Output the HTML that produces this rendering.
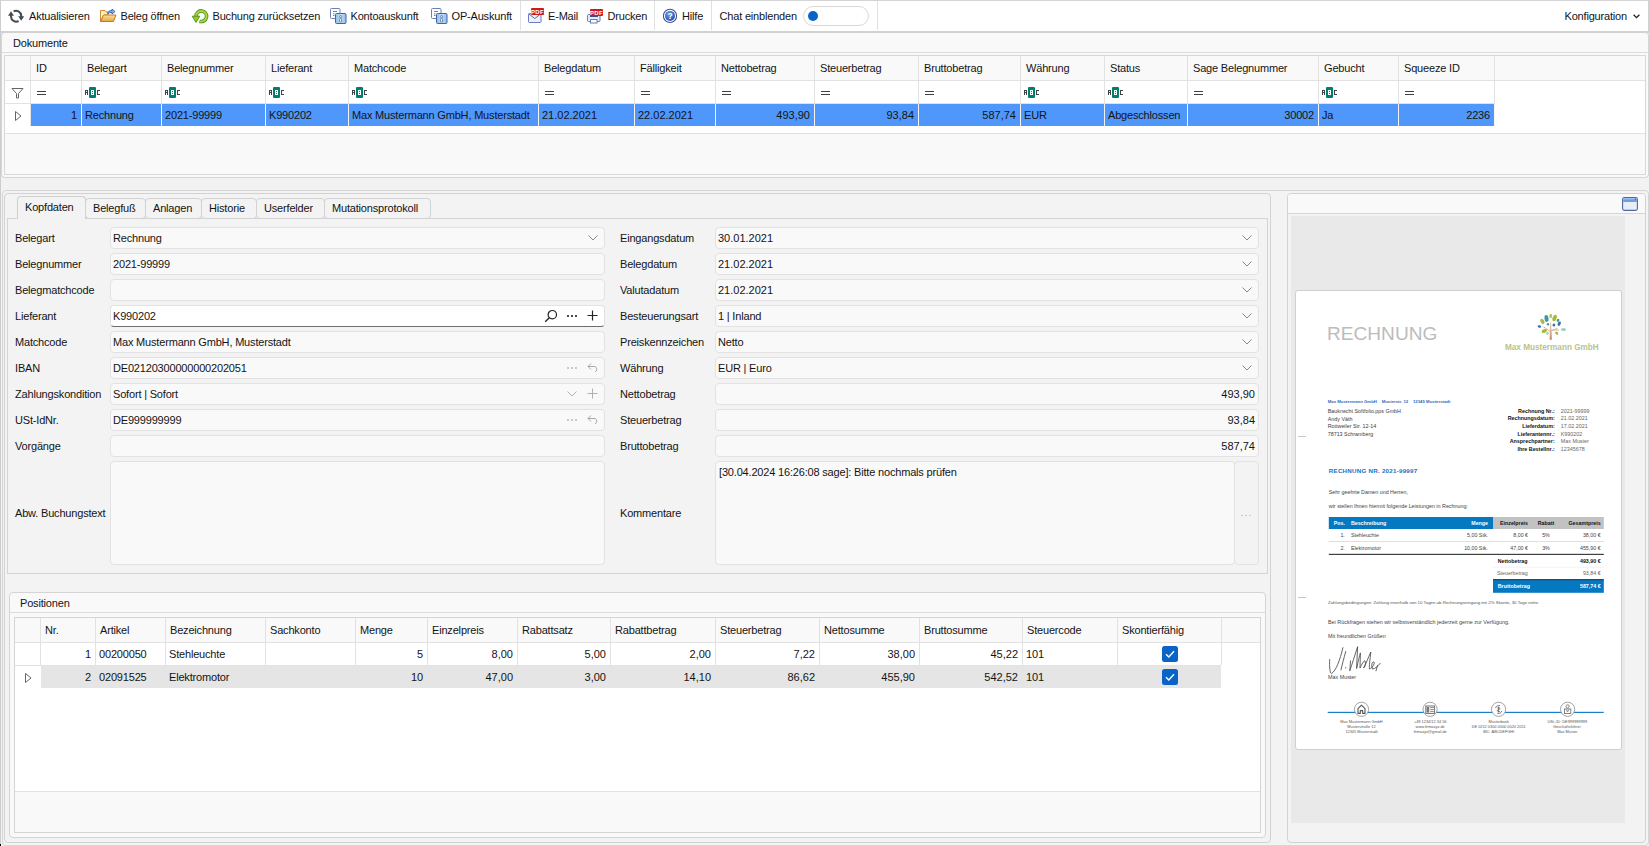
<!DOCTYPE html><html><head><meta charset="utf-8"><style>
*{box-sizing:border-box;margin:0;padding:0}
html,body{width:1649px;height:846px;overflow:hidden;background:#f2f2f2;font-family:"Liberation Sans", sans-serif;font-size:11px;color:#141414}
.abs{position:absolute}
.t{position:absolute;white-space:nowrap;line-height:13px;letter-spacing:-0.18px}
.bx{position:absolute;border:1px solid #e2e2e2;border-radius:4px;background:#f9f9f9}
</style></head><body><div class="abs" style="left:0;top:0;width:1649px;height:846px;border-left:1px solid #cdcdcd"></div><div class="abs" style="left:0;top:0;width:1649px;height:33px;background:#fff;border-top:1px solid #d4d4d4;border-left:1px solid #cdcdcd;border-right:1px solid #d0d0d0;border-bottom:2px solid #d2d2d2"></div><div class="t" style="left:29px;top:10px">Aktualisieren</div><div class="t" style="left:120.5px;top:10px">Beleg öffnen</div><div class="t" style="left:212.5px;top:10px">Buchung zurücksetzen</div><div class="t" style="left:350.5px;top:10px">Kontoauskunft</div><div class="t" style="left:451.5px;top:10px">OP-Auskunft</div><div class="t" style="left:548px;top:10px">E-Mail</div><div class="t" style="left:607.5px;top:10px">Drucken</div><div class="t" style="left:682px;top:10px">Hilfe</div><div class="t" style="left:719.5px;top:10px">Chat einblenden</div><div class="t" style="left:1564.5px;top:10px">Konfiguration</div><div class="abs" style="left:520px;top:1px;width:1px;height:29px;background:#e0e0e0"></div><div class="abs" style="left:654px;top:1px;width:1px;height:29px;background:#e0e0e0"></div><div class="abs" style="left:711px;top:1px;width:1px;height:29px;background:#e0e0e0"></div><div class="abs" style="left:877px;top:1px;width:1px;height:29px;background:#e0e0e0"></div><div class="abs" style="left:803px;top:6px;width:66px;height:20px;border:1px solid #d8d8d8;border-radius:10px;background:#fff"></div><div class="abs" style="left:808px;top:11px;width:10px;height:10px;border-radius:5px;background:#0a64c8"></div><div class="abs" style="left:1px;top:32px;width:1648px;height:146px;border:1px solid #d6d6d6;border-top-color:#d2d2d2;border-radius:4px;background:#f9f9f9"></div><div class="abs" style="left:2px;top:52px;width:1646px;height:1px;background:#dcdcdc"></div><div class="t" style="left:13px;top:37px">Dokumente</div><div class="abs" style="left:4px;top:55px;width:1642px;height:120px;border:1px solid #d8d8d8;background:#f9f9f9"></div><div class="abs" style="left:5px;top:56px;width:1640px;height:77px;background:#fff"></div><div class="abs" style="left:5px;top:56px;width:1640px;height:24px;background:#f9f9f9"></div><div class="abs" style="left:5px;top:80px;width:1640px;height:1px;background:#e2e2e2"></div><div class="abs" style="left:5px;top:133px;width:1640px;height:1px;background:#e2e2e2"></div><div class="abs" style="left:5px;top:103px;width:1490px;height:1px;background:#e2e2e2"></div><div class="abs" style="left:0;top:844px;width:1px;height:2px;background:#000"></div><div class="abs" style="left:31px;top:104px;width:1463px;height:22px;background:#4f97fb"></div><div class="abs" style="left:30px;top:56px;width:1px;height:70px;background:#e2e2e2"></div><div class="abs" style="left:81px;top:56px;width:1px;height:70px;background:#e2e2e2"></div><div class="abs" style="left:161px;top:56px;width:1px;height:70px;background:#e2e2e2"></div><div class="abs" style="left:265px;top:56px;width:1px;height:70px;background:#e2e2e2"></div><div class="abs" style="left:348px;top:56px;width:1px;height:70px;background:#e2e2e2"></div><div class="abs" style="left:538px;top:56px;width:1px;height:70px;background:#e2e2e2"></div><div class="abs" style="left:634px;top:56px;width:1px;height:70px;background:#e2e2e2"></div><div class="abs" style="left:715px;top:56px;width:1px;height:70px;background:#e2e2e2"></div><div class="abs" style="left:814px;top:56px;width:1px;height:70px;background:#e2e2e2"></div><div class="abs" style="left:918px;top:56px;width:1px;height:70px;background:#e2e2e2"></div><div class="abs" style="left:1020px;top:56px;width:1px;height:70px;background:#e2e2e2"></div><div class="abs" style="left:1104px;top:56px;width:1px;height:70px;background:#e2e2e2"></div><div class="abs" style="left:1187px;top:56px;width:1px;height:70px;background:#e2e2e2"></div><div class="abs" style="left:1318px;top:56px;width:1px;height:70px;background:#e2e2e2"></div><div class="abs" style="left:1398px;top:56px;width:1px;height:70px;background:#e2e2e2"></div><div class="abs" style="left:1494px;top:56px;width:1px;height:70px;background:#e2e2e2"></div><div class="abs" style="left:81px;top:104px;width:1px;height:22px;background:#fff;opacity:.6"></div><div class="abs" style="left:161px;top:104px;width:1px;height:22px;background:#fff;opacity:.6"></div><div class="abs" style="left:265px;top:104px;width:1px;height:22px;background:#fff;opacity:.6"></div><div class="abs" style="left:348px;top:104px;width:1px;height:22px;background:#fff;opacity:.6"></div><div class="abs" style="left:538px;top:104px;width:1px;height:22px;background:#fff;opacity:.6"></div><div class="abs" style="left:634px;top:104px;width:1px;height:22px;background:#fff;opacity:.6"></div><div class="abs" style="left:715px;top:104px;width:1px;height:22px;background:#fff;opacity:.6"></div><div class="abs" style="left:814px;top:104px;width:1px;height:22px;background:#fff;opacity:.6"></div><div class="abs" style="left:918px;top:104px;width:1px;height:22px;background:#fff;opacity:.6"></div><div class="abs" style="left:1020px;top:104px;width:1px;height:22px;background:#fff;opacity:.6"></div><div class="abs" style="left:1104px;top:104px;width:1px;height:22px;background:#fff;opacity:.6"></div><div class="abs" style="left:1187px;top:104px;width:1px;height:22px;background:#fff;opacity:.6"></div><div class="abs" style="left:1318px;top:104px;width:1px;height:22px;background:#fff;opacity:.6"></div><div class="abs" style="left:1398px;top:104px;width:1px;height:22px;background:#fff;opacity:.6"></div><div class="abs" style="left:1494px;top:104px;width:1px;height:22px;background:#fff;opacity:.6"></div><div class="t" style="left:36px;top:62px">ID</div><div class="abs" style="left:37px;top:91px;width:9px;height:4px;border-top:1px solid #3d4247;border-bottom:1px solid #3d4247"></div><div class="t" style="right:1572px;top:109px">1</div><div class="t" style="left:87px;top:62px">Belegart</div><svg width="17" height="11" viewBox="0 0 17 11" style="position:absolute;left:85px;top:87px"><g fill="#3d4247"><rect x="0" y="3" width="1" height="5"/><rect x="2" y="3" width="1" height="5"/><rect x="0" y="3" width="3" height="1"/><rect x="0" y="5" width="3" height="1"/></g><rect x="4" y="0" width="7" height="11" rx="1" fill="#00806c"/><rect x="6" y="3" width="3" height="5" fill="#fff"/><rect x="7" y="4" width="1" height="1" fill="#00806c"/><rect x="7" y="6" width="1" height="1" fill="#00806c"/><g fill="#3d4247"><rect x="12" y="3" width="1" height="5"/><rect x="12" y="3" width="3" height="1"/><rect x="12" y="7" width="3" height="1"/></g></svg><div class="t" style="left:85px;top:109px">Rechnung</div><div class="t" style="left:167px;top:62px">Belegnummer</div><svg width="17" height="11" viewBox="0 0 17 11" style="position:absolute;left:165px;top:87px"><g fill="#3d4247"><rect x="0" y="3" width="1" height="5"/><rect x="2" y="3" width="1" height="5"/><rect x="0" y="3" width="3" height="1"/><rect x="0" y="5" width="3" height="1"/></g><rect x="4" y="0" width="7" height="11" rx="1" fill="#00806c"/><rect x="6" y="3" width="3" height="5" fill="#fff"/><rect x="7" y="4" width="1" height="1" fill="#00806c"/><rect x="7" y="6" width="1" height="1" fill="#00806c"/><g fill="#3d4247"><rect x="12" y="3" width="1" height="5"/><rect x="12" y="3" width="3" height="1"/><rect x="12" y="7" width="3" height="1"/></g></svg><div class="t" style="left:165px;top:109px">2021-99999</div><div class="t" style="left:271px;top:62px">Lieferant</div><svg width="17" height="11" viewBox="0 0 17 11" style="position:absolute;left:269px;top:87px"><g fill="#3d4247"><rect x="0" y="3" width="1" height="5"/><rect x="2" y="3" width="1" height="5"/><rect x="0" y="3" width="3" height="1"/><rect x="0" y="5" width="3" height="1"/></g><rect x="4" y="0" width="7" height="11" rx="1" fill="#00806c"/><rect x="6" y="3" width="3" height="5" fill="#fff"/><rect x="7" y="4" width="1" height="1" fill="#00806c"/><rect x="7" y="6" width="1" height="1" fill="#00806c"/><g fill="#3d4247"><rect x="12" y="3" width="1" height="5"/><rect x="12" y="3" width="3" height="1"/><rect x="12" y="7" width="3" height="1"/></g></svg><div class="t" style="left:269px;top:109px">K990202</div><div class="t" style="left:354px;top:62px">Matchcode</div><svg width="17" height="11" viewBox="0 0 17 11" style="position:absolute;left:352px;top:87px"><g fill="#3d4247"><rect x="0" y="3" width="1" height="5"/><rect x="2" y="3" width="1" height="5"/><rect x="0" y="3" width="3" height="1"/><rect x="0" y="5" width="3" height="1"/></g><rect x="4" y="0" width="7" height="11" rx="1" fill="#00806c"/><rect x="6" y="3" width="3" height="5" fill="#fff"/><rect x="7" y="4" width="1" height="1" fill="#00806c"/><rect x="7" y="6" width="1" height="1" fill="#00806c"/><g fill="#3d4247"><rect x="12" y="3" width="1" height="5"/><rect x="12" y="3" width="3" height="1"/><rect x="12" y="7" width="3" height="1"/></g></svg><div class="t" style="left:352px;top:109px">Max Mustermann GmbH, Musterstadt</div><div class="t" style="left:544px;top:62px">Belegdatum</div><div class="abs" style="left:545px;top:91px;width:9px;height:4px;border-top:1px solid #3d4247;border-bottom:1px solid #3d4247"></div><div class="t" style="letter-spacing:0;left:542px;top:109px">21.02.2021</div><div class="t" style="left:640px;top:62px">Fälligkeit</div><div class="abs" style="left:641px;top:91px;width:9px;height:4px;border-top:1px solid #3d4247;border-bottom:1px solid #3d4247"></div><div class="t" style="letter-spacing:0;left:638px;top:109px">22.02.2021</div><div class="t" style="left:721px;top:62px">Nettobetrag</div><div class="abs" style="left:722px;top:91px;width:9px;height:4px;border-top:1px solid #3d4247;border-bottom:1px solid #3d4247"></div><div class="t" style="letter-spacing:0;right:839px;top:109px">493,90</div><div class="t" style="left:820px;top:62px">Steuerbetrag</div><div class="abs" style="left:821px;top:91px;width:9px;height:4px;border-top:1px solid #3d4247;border-bottom:1px solid #3d4247"></div><div class="t" style="letter-spacing:0;right:735px;top:109px">93,84</div><div class="t" style="left:924px;top:62px">Bruttobetrag</div><div class="abs" style="left:925px;top:91px;width:9px;height:4px;border-top:1px solid #3d4247;border-bottom:1px solid #3d4247"></div><div class="t" style="letter-spacing:0;right:633px;top:109px">587,74</div><div class="t" style="left:1026px;top:62px">Währung</div><svg width="17" height="11" viewBox="0 0 17 11" style="position:absolute;left:1024px;top:87px"><g fill="#3d4247"><rect x="0" y="3" width="1" height="5"/><rect x="2" y="3" width="1" height="5"/><rect x="0" y="3" width="3" height="1"/><rect x="0" y="5" width="3" height="1"/></g><rect x="4" y="0" width="7" height="11" rx="1" fill="#00806c"/><rect x="6" y="3" width="3" height="5" fill="#fff"/><rect x="7" y="4" width="1" height="1" fill="#00806c"/><rect x="7" y="6" width="1" height="1" fill="#00806c"/><g fill="#3d4247"><rect x="12" y="3" width="1" height="5"/><rect x="12" y="3" width="3" height="1"/><rect x="12" y="7" width="3" height="1"/></g></svg><div class="t" style="left:1024px;top:109px">EUR</div><div class="t" style="left:1110px;top:62px">Status</div><svg width="17" height="11" viewBox="0 0 17 11" style="position:absolute;left:1108px;top:87px"><g fill="#3d4247"><rect x="0" y="3" width="1" height="5"/><rect x="2" y="3" width="1" height="5"/><rect x="0" y="3" width="3" height="1"/><rect x="0" y="5" width="3" height="1"/></g><rect x="4" y="0" width="7" height="11" rx="1" fill="#00806c"/><rect x="6" y="3" width="3" height="5" fill="#fff"/><rect x="7" y="4" width="1" height="1" fill="#00806c"/><rect x="7" y="6" width="1" height="1" fill="#00806c"/><g fill="#3d4247"><rect x="12" y="3" width="1" height="5"/><rect x="12" y="3" width="3" height="1"/><rect x="12" y="7" width="3" height="1"/></g></svg><div class="t" style="left:1108px;top:109px">Abgeschlossen</div><div class="t" style="left:1193px;top:62px">Sage Belegnummer</div><div class="abs" style="left:1194px;top:91px;width:9px;height:4px;border-top:1px solid #3d4247;border-bottom:1px solid #3d4247"></div><div class="t" style="right:335px;top:109px">30002</div><div class="t" style="left:1324px;top:62px">Gebucht</div><svg width="17" height="11" viewBox="0 0 17 11" style="position:absolute;left:1322px;top:87px"><g fill="#3d4247"><rect x="0" y="3" width="1" height="5"/><rect x="2" y="3" width="1" height="5"/><rect x="0" y="3" width="3" height="1"/><rect x="0" y="5" width="3" height="1"/></g><rect x="4" y="0" width="7" height="11" rx="1" fill="#00806c"/><rect x="6" y="3" width="3" height="5" fill="#fff"/><rect x="7" y="4" width="1" height="1" fill="#00806c"/><rect x="7" y="6" width="1" height="1" fill="#00806c"/><g fill="#3d4247"><rect x="12" y="3" width="1" height="5"/><rect x="12" y="3" width="3" height="1"/><rect x="12" y="7" width="3" height="1"/></g></svg><div class="t" style="left:1322px;top:109px">Ja</div><div class="t" style="left:1404px;top:62px">Squeeze ID</div><div class="abs" style="left:1405px;top:91px;width:9px;height:4px;border-top:1px solid #3d4247;border-bottom:1px solid #3d4247"></div><div class="t" style="right:159px;top:109px">2236</div><svg class="abs" style="left:11px;top:87px" width="13" height="12" viewBox="0 0 13 12"><path d="M1 1.5H12L7.5 6.5V11H5.5V6.5Z" fill="none" stroke="#666" stroke-width="1"/></svg><svg class="abs" style="left:14px;top:110px" width="9" height="12" viewBox="0 0 9 12"><path d="M1.5 1.5L7 6L1.5 10.5Z" fill="none" stroke="#666" stroke-width="1"/></svg><div class="abs" style="left:2px;top:190px;width:1647px;height:656px;border:1px solid #d6d6d6;border-radius:4px;background:#f3f3f3"></div><div class="abs" style="left:4px;top:193px;width:1267px;height:650px;border:1px solid #d2d2d2;border-radius:4px;background:#f3f3f3"></div><div class="abs" style="left:7px;top:218px;width:1261px;height:356px;border:1px solid #d4d4d4;background:#f3f3f3"></div><div class="abs" style="left:17px;top:196px;width:69px;height:23px;border:1px solid #cfcfcf;border-bottom:none;border-radius:4px 4px 0 0;background:#f3f3f3"></div><div class="t" style="left:25px;top:201px">Kopfdaten</div><div class="abs" style="left:85px;top:198px;width:61px;height:21px;border:1px solid #d2d2d2;border-radius:4px;background:#f3f3f3"></div><div class="t" style="left:93px;top:202px">Belegfuß</div><div class="abs" style="left:145px;top:198px;width:57px;height:21px;border:1px solid #d2d2d2;border-radius:4px;background:#f3f3f3"></div><div class="t" style="left:153px;top:202px">Anlagen</div><div class="abs" style="left:201px;top:198px;width:56px;height:21px;border:1px solid #d2d2d2;border-radius:4px;background:#f3f3f3"></div><div class="t" style="left:209px;top:202px">Historie</div><div class="abs" style="left:256px;top:198px;width:69px;height:21px;border:1px solid #d2d2d2;border-radius:4px;background:#f3f3f3"></div><div class="t" style="left:264px;top:202px">Userfelder</div><div class="abs" style="left:324px;top:198px;width:107px;height:21px;border:1px solid #d2d2d2;border-radius:4px;background:#f3f3f3"></div><div class="t" style="left:332px;top:202px">Mutationsprotokoll</div><div class="t" style="left:15px;top:232px">Belegart</div><div class="bx" style="left:110px;top:227px;width:495px;height:22px;background:#f9f9f9;"></div><div class="t" style="left:113px;top:232px">Rechnung</div><div class="t" style="left:620px;top:232px">Eingangsdatum</div><div class="bx" style="left:715px;top:227px;width:544px;height:22px"></div><div class="t" style="letter-spacing:0;left:718px;top:232px">30.01.2021</div><svg class="abs" style="left:1242px;top:235px" width="10" height="6" viewBox="0 0 10 6"><path d="M0.5 0.5L5 5L9.5 0.5" fill="none" stroke="#8a8a8a" stroke-width="1"/></svg><div class="t" style="left:15px;top:258px">Belegnummer</div><div class="bx" style="left:110px;top:253px;width:495px;height:22px;background:#f9f9f9;"></div><div class="t" style="left:113px;top:258px">2021-99999</div><div class="t" style="left:620px;top:258px">Belegdatum</div><div class="bx" style="left:715px;top:253px;width:544px;height:22px"></div><div class="t" style="letter-spacing:0;left:718px;top:258px">21.02.2021</div><svg class="abs" style="left:1242px;top:261px" width="10" height="6" viewBox="0 0 10 6"><path d="M0.5 0.5L5 5L9.5 0.5" fill="none" stroke="#8a8a8a" stroke-width="1"/></svg><div class="t" style="left:15px;top:284px">Belegmatchcode</div><div class="bx" style="left:110px;top:279px;width:495px;height:22px;background:#f9f9f9;"></div><div class="t" style="left:620px;top:284px">Valutadatum</div><div class="bx" style="left:715px;top:279px;width:544px;height:22px"></div><div class="t" style="letter-spacing:0;left:718px;top:284px">21.02.2021</div><svg class="abs" style="left:1242px;top:287px" width="10" height="6" viewBox="0 0 10 6"><path d="M0.5 0.5L5 5L9.5 0.5" fill="none" stroke="#8a8a8a" stroke-width="1"/></svg><div class="t" style="left:15px;top:310px">Lieferant</div><div class="bx" style="left:110px;top:305px;width:495px;height:22px;background:#fff;border-bottom:1px solid #6e6e6e;"></div><div class="t" style="left:113px;top:310px">K990202</div><div class="t" style="left:620px;top:310px">Besteuerungsart</div><div class="bx" style="left:715px;top:305px;width:544px;height:22px"></div><div class="t" style="left:718px;top:310px">1 | Inland</div><svg class="abs" style="left:1242px;top:313px" width="10" height="6" viewBox="0 0 10 6"><path d="M0.5 0.5L5 5L9.5 0.5" fill="none" stroke="#8a8a8a" stroke-width="1"/></svg><div class="t" style="left:15px;top:336px">Matchcode</div><div class="bx" style="left:110px;top:331px;width:495px;height:22px;background:#f9f9f9;"></div><div class="t" style="left:113px;top:336px">Max Mustermann GmbH, Musterstadt</div><div class="t" style="left:620px;top:336px">Preiskennzeichen</div><div class="bx" style="left:715px;top:331px;width:544px;height:22px"></div><div class="t" style="left:718px;top:336px">Netto</div><svg class="abs" style="left:1242px;top:339px" width="10" height="6" viewBox="0 0 10 6"><path d="M0.5 0.5L5 5L9.5 0.5" fill="none" stroke="#8a8a8a" stroke-width="1"/></svg><div class="t" style="left:15px;top:362px">IBAN</div><div class="bx" style="left:110px;top:357px;width:495px;height:22px;background:#f9f9f9;"></div><div class="t" style="left:113px;top:362px">DE02120300000000202051</div><div class="t" style="left:620px;top:362px">Währung</div><div class="bx" style="left:715px;top:357px;width:544px;height:22px"></div><div class="t" style="left:718px;top:362px">EUR | Euro</div><svg class="abs" style="left:1242px;top:365px" width="10" height="6" viewBox="0 0 10 6"><path d="M0.5 0.5L5 5L9.5 0.5" fill="none" stroke="#8a8a8a" stroke-width="1"/></svg><div class="t" style="left:15px;top:388px">Zahlungskondition</div><div class="bx" style="left:110px;top:383px;width:495px;height:22px;background:#f9f9f9;"></div><div class="t" style="left:113px;top:388px">Sofort | Sofort</div><div class="t" style="left:620px;top:388px">Nettobetrag</div><div class="bx" style="left:715px;top:383px;width:544px;height:22px"></div><div class="t" style="letter-spacing:0;right:394px;top:388px">493,90</div><div class="t" style="left:15px;top:414px">USt-IdNr.</div><div class="bx" style="left:110px;top:409px;width:495px;height:22px;background:#f9f9f9;"></div><div class="t" style="left:113px;top:414px">DE999999999</div><div class="t" style="left:620px;top:414px">Steuerbetrag</div><div class="bx" style="left:715px;top:409px;width:544px;height:22px"></div><div class="t" style="letter-spacing:0;right:394px;top:414px">93,84</div><div class="t" style="left:15px;top:440px">Vorgänge</div><div class="bx" style="left:110px;top:435px;width:495px;height:22px;background:#f9f9f9;"></div><div class="t" style="left:620px;top:440px">Bruttobetrag</div><div class="bx" style="left:715px;top:435px;width:544px;height:22px"></div><div class="t" style="letter-spacing:0;right:394px;top:440px">587,74</div><svg class="abs" style="left:588px;top:235px" width="10" height="6" viewBox="0 0 10 6"><path d="M0.5 0.5L5 5L9.5 0.5" fill="none" stroke="#8a8a8a" stroke-width="1"/></svg><svg class="abs" style="left:544px;top:309px" width="14" height="14" viewBox="0 0 14 14"><circle cx="8.3" cy="5.7" r="4.2" fill="none" stroke="#222" stroke-width="1.2"/><path d="M5.3 8.7L1.2 12.8" stroke="#222" stroke-width="1.3"/></svg><svg class="abs" style="left:566px;top:314px" width="12" height="4" viewBox="0 0 12 4"><circle cx="2" cy="2" r="1.1" fill="#222"/><circle cx="6" cy="2" r="1.1" fill="#222"/><circle cx="10" cy="2" r="1.1" fill="#222"/></svg><svg class="abs" style="left:587px;top:310px" width="11" height="11" viewBox="0 0 11 11"><path d="M5.5 0.5V10.5M0.5 5.5H10.5" stroke="#222" stroke-width="1.2"/></svg><svg class="abs" style="left:566px;top:366px" width="12" height="4" viewBox="0 0 12 4"><circle cx="2" cy="2" r="1" fill="#b8b8b8"/><circle cx="6" cy="2" r="1" fill="#b8b8b8"/><circle cx="10" cy="2" r="1" fill="#b8b8b8"/></svg><svg class="abs" style="left:587px;top:362px" width="12" height="10" viewBox="0 0 12 10"><path d="M4 1.5L1 4.5L4 7.5M1 4.5H8A3 3 0 0 1 8 10" fill="none" stroke="#a8a8a8" stroke-width="1"/></svg><svg class="abs" style="left:566px;top:418px" width="12" height="4" viewBox="0 0 12 4"><circle cx="2" cy="2" r="1" fill="#b8b8b8"/><circle cx="6" cy="2" r="1" fill="#b8b8b8"/><circle cx="10" cy="2" r="1" fill="#b8b8b8"/></svg><svg class="abs" style="left:587px;top:414px" width="12" height="10" viewBox="0 0 12 10"><path d="M4 1.5L1 4.5L4 7.5M1 4.5H8A3 3 0 0 1 8 10" fill="none" stroke="#a8a8a8" stroke-width="1"/></svg><svg class="abs" style="left:567px;top:391px" width="10" height="6" viewBox="0 0 10 6"><path d="M0.5 0.5L5 5L9.5 0.5" fill="none" stroke="#b0b0b0" stroke-width="1"/></svg><svg class="abs" style="left:587px;top:388px" width="11" height="11" viewBox="0 0 11 11"><path d="M5.5 0.5V10.5M0.5 5.5H10.5" stroke="#b0b0b0" stroke-width="1"/></svg><div class="t" style="left:15px;top:507px">Abw. Buchungstext</div><div class="bx" style="left:110px;top:461px;width:495px;height:104px"></div><div class="t" style="left:620px;top:507px">Kommentare</div><div class="bx" style="left:715px;top:461px;width:520px;height:104px"></div><div class="bx" style="left:1234px;top:461px;width:25px;height:104px;background:#f3f3f3"></div><div class="t" style="left:719px;top:466px">[30.04.2024 16:26:08 sage]: Bitte nochmals prüfen</div><svg class="abs" style="left:1240px;top:514px" width="12" height="3" viewBox="0 0 12 3"><circle cx="2" cy="1.5" r=".8" fill="#c0c0c0"/><circle cx="6" cy="1.5" r=".8" fill="#c0c0c0"/><circle cx="10" cy="1.5" r=".8" fill="#c0c0c0"/></svg><div class="abs" style="left:9px;top:592px;width:1257px;height:246px;border:1px solid #d4d4d4;border-radius:4px;background:#f9f9f9"></div><div class="abs" style="left:10px;top:612px;width:1255px;height:1px;background:#dcdcdc"></div><div class="t" style="left:20px;top:597px">Positionen</div><div class="abs" style="left:14px;top:617px;width:1247px;height:216px;border:1px solid #d4d4d4;background:#fff"></div><div class="abs" style="left:15px;top:618px;width:1245px;height:24px;background:#f9f9f9"></div><div class="abs" style="left:15px;top:791px;width:1245px;height:41px;background:#f9f9f9;border-top:1px solid #e2e2e2"></div><div class="abs" style="left:41px;top:666px;width:1180px;height:22px;background:#e5e5e5"></div><div class="abs" style="left:15px;top:642px;width:1245px;height:1px;background:#e2e2e2"></div><div class="abs" style="left:15px;top:665px;width:1206px;height:1px;background:#e2e2e2"></div><div class="abs" style="left:40px;top:618px;width:1px;height:47px;background:#e2e2e2"></div><div class="abs" style="left:95px;top:618px;width:1px;height:47px;background:#e2e2e2"></div><div class="abs" style="left:165px;top:618px;width:1px;height:47px;background:#e2e2e2"></div><div class="abs" style="left:265px;top:618px;width:1px;height:47px;background:#e2e2e2"></div><div class="abs" style="left:355px;top:618px;width:1px;height:47px;background:#e2e2e2"></div><div class="abs" style="left:427px;top:618px;width:1px;height:47px;background:#e2e2e2"></div><div class="abs" style="left:517px;top:618px;width:1px;height:47px;background:#e2e2e2"></div><div class="abs" style="left:610px;top:618px;width:1px;height:47px;background:#e2e2e2"></div><div class="abs" style="left:715px;top:618px;width:1px;height:47px;background:#e2e2e2"></div><div class="abs" style="left:819px;top:618px;width:1px;height:47px;background:#e2e2e2"></div><div class="abs" style="left:919px;top:618px;width:1px;height:47px;background:#e2e2e2"></div><div class="abs" style="left:1022px;top:618px;width:1px;height:47px;background:#e2e2e2"></div><div class="abs" style="left:1117px;top:618px;width:1px;height:47px;background:#e2e2e2"></div><div class="abs" style="left:1221px;top:618px;width:1px;height:47px;background:#e2e2e2"></div><div class="t" style="left:45px;top:624px">Nr.</div><div class="t" style="right:1558px;top:648px">1</div><div class="t" style="right:1558px;top:671px">2</div><div class="t" style="left:100px;top:624px">Artikel</div><div class="t" style="left:99px;top:648px">00200050</div><div class="t" style="left:99px;top:671px">02091525</div><div class="t" style="left:170px;top:624px">Bezeichnung</div><div class="t" style="left:169px;top:648px">Stehleuchte</div><div class="t" style="left:169px;top:671px">Elektromotor</div><div class="t" style="left:270px;top:624px">Sachkonto</div><div class="t" style="left:269px;top:648px"></div><div class="t" style="left:269px;top:671px"></div><div class="t" style="left:360px;top:624px">Menge</div><div class="t" style="right:1226px;top:648px">5</div><div class="t" style="right:1226px;top:671px">10</div><div class="t" style="left:432px;top:624px">Einzelpreis</div><div class="t" style="letter-spacing:0;right:1136px;top:648px">8,00</div><div class="t" style="letter-spacing:0;right:1136px;top:671px">47,00</div><div class="t" style="left:522px;top:624px">Rabattsatz</div><div class="t" style="letter-spacing:0;right:1043px;top:648px">5,00</div><div class="t" style="letter-spacing:0;right:1043px;top:671px">3,00</div><div class="t" style="left:615px;top:624px">Rabattbetrag</div><div class="t" style="letter-spacing:0;right:938px;top:648px">2,00</div><div class="t" style="letter-spacing:0;right:938px;top:671px">14,10</div><div class="t" style="left:720px;top:624px">Steuerbetrag</div><div class="t" style="letter-spacing:0;right:834px;top:648px">7,22</div><div class="t" style="letter-spacing:0;right:834px;top:671px">86,62</div><div class="t" style="left:824px;top:624px">Nettosumme</div><div class="t" style="letter-spacing:0;right:734px;top:648px">38,00</div><div class="t" style="letter-spacing:0;right:734px;top:671px">455,90</div><div class="t" style="left:924px;top:624px">Bruttosumme</div><div class="t" style="letter-spacing:0;right:631px;top:648px">45,22</div><div class="t" style="letter-spacing:0;right:631px;top:671px">542,52</div><div class="t" style="left:1027px;top:624px">Steuercode</div><div class="t" style="left:1026px;top:648px">101</div><div class="t" style="left:1026px;top:671px">101</div><div class="t" style="left:1122px;top:624px">Skontierfähig</div><svg class="abs" style="left:1162px;top:646px" width="16" height="16" viewBox="0 0 16 16"><rect width="16" height="16" rx="2.5" fill="#0a64c8"/><path d="M4 8.2L6.8 11L12 5.2" fill="none" stroke="#fff" stroke-width="1.4"/></svg><svg class="abs" style="left:1162px;top:669px" width="16" height="16" viewBox="0 0 16 16"><rect width="16" height="16" rx="2.5" fill="#0a64c8"/><path d="M4 8.2L6.8 11L12 5.2" fill="none" stroke="#fff" stroke-width="1.4"/></svg><svg class="abs" style="left:24px;top:672px" width="9" height="12" viewBox="0 0 9 12"><path d="M1.5 1.5L7 6L1.5 10.5Z" fill="none" stroke="#666" stroke-width="1"/></svg><div class="abs" style="left:1287px;top:193px;width:359px;height:650px;border:1px solid #d2d2d2;border-radius:4px;background:#f3f3f3"></div><div class="abs" style="left:1288px;top:194px;width:357px;height:19px;border-radius:3px 3px 0 0;background:#f9f9f9"></div><div class="abs" style="left:1288px;top:213px;width:357px;height:1px;background:#d6d6d6"></div><div class="abs" style="left:1291px;top:216px;width:334px;height:607px;background:#e9e9e9"></div><svg class="abs" style="left:1622px;top:197px" width="16" height="14" viewBox="0 0 16 14"><defs><linearGradient id="ig" x1="0" y1="0" x2="0" y2="1"><stop offset="0" stop-color="#9cc2ec"/><stop offset="1" stop-color="#4c8ad4"/></linearGradient></defs><rect x="0.6" y="0.6" width="14.8" height="12.8" rx="1.8" fill="#e8eef8" stroke="#4b67a8" stroke-width="1.1"/><rect x="1.2" y="1.2" width="13.6" height="3.6" fill="url(#ig)"/><rect x="12.8" y="1.6" width="1.4" height="1.4" rx="0.7" fill="#e02828"/></svg><div class="abs" style="left:1295px;top:290px;width:327px;height:460px;background:#fff;border:1px solid #d0d0d0;border-radius:3px"></div><svg class="abs" style="left:4px;top:4px" width="24" height="24" viewBox="0 0 24 24"><g fill="none" stroke="#434c55" stroke-width="2"><path d="M9.6 7.4A5.2 5.2 0 0 1 17.2 11.6V13.5"/><path d="M14.6 17A5.2 5.2 0 0 1 7 12.6V10.5"/></g><g fill="#434c55"><path d="M14.2 12.3H20.2L17.2 16.8Z"/><path d="M4 11.7H10L7 7.2Z"/></g></svg><svg class="abs" style="left:96px;top:4px" width="24" height="24" viewBox="0 0 24 24"><defs><linearGradient id="fg" x1="0" y1="0" x2="0" y2="1"><stop offset="0" stop-color="#fbe3a0"/><stop offset="1" stop-color="#e9a23c"/></linearGradient></defs><path d="M4.5 17.5V6.5H9L10 8H12V11H8Z" fill="#fdf3c8" stroke="#d08a30" stroke-width="1"/><path d="M4.5 17.5L7.5 11H20L17.5 17.5Z" fill="url(#fg)" stroke="#c8782a" stroke-width="1"/><path d="M11.5 9.5C12 7 14 6.5 16 6.5V5L19 7.6L16 10V8.5C14.2 8.5 12.8 8.8 11.5 9.5Z" fill="#7fb3e8" stroke="#2c62b0" stroke-width="0.9"/></svg><svg class="abs" style="left:188px;top:4px" width="24" height="24" viewBox="0 0 24 24"><path d="M8 12.5A5.3 5.3 0 1 1 11.5 17.2" fill="none" stroke="#4f8a10" stroke-width="3.6"/><path d="M8 12.5A5.3 5.3 0 1 1 11.5 17.2" fill="none" stroke="#a6d84a" stroke-width="2"/><path d="M4.2 12.2H11.8L8 18.4Z" fill="#93cc30" stroke="#4f8a10" stroke-width="0.9"/></svg><svg class="abs" style="left:326px;top:4px" width="24" height="24" viewBox="0 0 24 24"><rect x="4.5" y="4.5" width="9.5" height="10" rx="1" fill="#fff" stroke="#6a7fc0" stroke-width="1"/><path d="M7 7.5H11M7 9.8H8.5M7 11.5H8.5" stroke="#6a7fc0" stroke-width="1"/><defs><linearGradient id="ib326" x1="0" y1="0" x2="1" y2="0"><stop offset="0" stop-color="#8fbde6"/><stop offset="0.5" stop-color="#c6e0f4"/><stop offset="1" stop-color="#8fbde6"/></linearGradient></defs><rect x="9.5" y="9.5" width="10.5" height="10" rx="1" fill="url(#ib326)" stroke="#4264a8" stroke-width="1"/><rect x="13.6" y="11.6" width="2" height="2" rx="0.9" fill="#fff" stroke="#4264a8" stroke-width="0.8"/><rect x="13.6" y="14.4" width="2" height="3.8" rx="0.8" fill="#fff" stroke="#4264a8" stroke-width="0.8"/></svg><svg class="abs" style="left:427px;top:4px" width="24" height="24" viewBox="0 0 24 24"><rect x="4.5" y="4.5" width="9.5" height="10" rx="1" fill="#fff" stroke="#6a7fc0" stroke-width="1"/><path d="M7 7.5H11M7 9.8H8.5M7 11.5H8.5" stroke="#6a7fc0" stroke-width="1"/><defs><linearGradient id="ib427" x1="0" y1="0" x2="1" y2="0"><stop offset="0" stop-color="#8fbde6"/><stop offset="0.5" stop-color="#c6e0f4"/><stop offset="1" stop-color="#8fbde6"/></linearGradient></defs><rect x="9.5" y="9.5" width="10.5" height="10" rx="1" fill="url(#ib427)" stroke="#4264a8" stroke-width="1"/><rect x="13.6" y="11.6" width="2" height="2" rx="0.9" fill="#fff" stroke="#4264a8" stroke-width="0.8"/><rect x="13.6" y="14.4" width="2" height="3.8" rx="0.8" fill="#fff" stroke="#4264a8" stroke-width="0.8"/></svg><svg class="abs" style="left:524px;top:4px" width="24" height="24" viewBox="0 0 24 24"><rect x="4.5" y="9.5" width="12.5" height="9" rx="0.8" fill="#eef0f8" stroke="#6b7cc0" stroke-width="1"/><path d="M5 10L10.8 14.6L16.5 10" fill="none" stroke="#5a6aa8" stroke-width="1"/><rect x="7" y="4" width="13" height="7" rx="1" fill="#cc1b1f"/><text x="13.5" y="9.6" font-family="Liberation Sans" font-weight="bold" font-size="6" fill="#fff" text-anchor="middle" letter-spacing="0.3">PDF</text></svg><svg class="abs" style="left:583px;top:4px" width="24" height="24" viewBox="0 0 24 24"><rect x="4.5" y="10.5" width="12.5" height="7" rx="1" fill="#e8ecf6" stroke="#6b7cc0" stroke-width="1"/><rect x="7" y="11" width="8" height="2" fill="#3a4c8c"/><rect x="7.5" y="15.5" width="6.5" height="3.5" fill="#fff" stroke="#6b7cc0" stroke-width="1"/><rect x="7" y="5" width="13" height="7" rx="1" fill="#cc1b1f"/><text x="13.5" y="10.6" font-family="Liberation Sans" font-weight="bold" font-size="6" fill="#fff" text-anchor="middle" letter-spacing="0.3">PDF</text></svg><svg class="abs" style="left:658px;top:4px" width="24" height="24" viewBox="0 0 24 24"><defs><radialGradient id="hg" cx="0.4" cy="0.35" r="0.7"><stop offset="0" stop-color="#6aa0e8"/><stop offset="1" stop-color="#2050b0"/></radialGradient></defs><circle cx="12" cy="11.9" r="6.6" fill="#fff" stroke="#3c4f9a" stroke-width="1.1"/><circle cx="12" cy="11.9" r="5" fill="url(#hg)"/><text x="12" y="15" font-family="Liberation Sans" font-weight="bold" font-size="8.5" fill="#fff" text-anchor="middle">?</text></svg><svg class="abs" style="left:1633px;top:14px" width="7" height="5" viewBox="0 0 7 5"><path d="M0.6 0.8L3.5 3.7L6.4 0.8" fill="none" stroke="#222" stroke-width="1.3"/></svg><svg class="abs" style="left:1295px;top:290px" width="327" height="460" viewBox="1295 290 327 460" font-family="Liberation Sans"><text x="1327" y="340" font-size="19.1" font-weight="normal" fill="#bcbcbc" text-anchor="start" letter-spacing="0">RECHNUNG</text><g><defs><linearGradient id="trk" x1="0" y1="0" x2="0" y2="1"><stop offset="0" stop-color="#f0dccc"/><stop offset="1" stop-color="#c48a5a"/></linearGradient></defs><path d="M1549.6 339.8L1550.1 322H1551.3L1551.9 339.8Z" fill="url(#trk)"/><path d="M1550.3 331.5L1543.5 326.8M1551.2 331L1557.5 328.3M1552.5 329.8L1559 330" stroke="#dcb090" stroke-width="1" fill="none"/><ellipse cx="1546.5" cy="318.4" rx="2" ry="3.5" fill="#3a9ca0" transform="rotate(-8 1546.5 318.4)"/><ellipse cx="1550.7" cy="315.9" rx="1.3" ry="2.2" fill="#b0be5c"/><ellipse cx="1554.6" cy="318" rx="2" ry="3.4" fill="#a8ba30" transform="rotate(20 1554.6 318)"/><ellipse cx="1542.4" cy="321.4" rx="1.8" ry="2.8" fill="#aab85a" transform="rotate(-35 1542.4 321.4)"/><ellipse cx="1558" cy="320.3" rx="1.3" ry="1.6" fill="#3a9ca0" transform="rotate(30 1558 320.3)"/><ellipse cx="1559.2" cy="323.7" rx="1.5" ry="2.3" fill="#3a6eac" transform="rotate(25 1559.2 323.7)"/><circle cx="1548" cy="324.2" r="1.2" fill="#3a9ca0"/><ellipse cx="1553.9" cy="325" rx="1.4" ry="1.6" fill="#3a6eac"/><ellipse cx="1539.4" cy="326.5" rx="1.8" ry="1.2" fill="#3a6eac" transform="rotate(15 1539.4 326.5)"/><ellipse cx="1544.3" cy="331" rx="2.8" ry="1.8" fill="#a8ba30" transform="rotate(-20 1544.3 331)"/><ellipse cx="1547.5" cy="333.3" rx="1.2" ry="1.6" fill="#9ed0c8" transform="rotate(30 1547.5 333.3)"/><ellipse cx="1556.7" cy="333.1" rx="1.8" ry="1.3" fill="#aab85a" transform="rotate(35 1556.7 333.1)"/><ellipse cx="1563.5" cy="329.5" rx="2.6" ry="1.6" fill="#98d0c6"/></g><text x="1505" y="350" font-size="8.2" font-weight="bold" fill="#b8c48a" text-anchor="start" letter-spacing="0">Max Mustermann GmbH</text><text x="1327.7" y="403" font-size="4.3" font-weight="bold" fill="#2e6cb8" text-anchor="start" letter-spacing="0">Max Mustermann GmbH &#160;&#160; Musterstr. 12 &#160;&#160; 12345 Musterstadt</text><text x="1327.7" y="412.6" font-size="5.36" font-weight="normal" fill="#404040" text-anchor="start" letter-spacing="0">Bauknecht Softfolio.pps GmbH</text><text x="1327.7" y="420.6" font-size="5.36" font-weight="normal" fill="#404040" text-anchor="start" letter-spacing="0">Andy Väth</text><text x="1327.7" y="428" font-size="5.36" font-weight="normal" fill="#404040" text-anchor="start" letter-spacing="0">Rottweiler Str. 12-14</text><text x="1327.7" y="435.6" font-size="5.36" font-weight="normal" fill="#404040" text-anchor="start" letter-spacing="0">78713 Schramberg</text><text x="1554.7" y="413.0" font-size="5.37" font-weight="bold" fill="#111" text-anchor="end" letter-spacing="0">Rechnung Nr.:</text><text x="1560.8" y="413.0" font-size="5.37" font-weight="normal" fill="#666" text-anchor="start" letter-spacing="0">2021-99999</text><text x="1554.7" y="420.2" font-size="5.37" font-weight="bold" fill="#111" text-anchor="end" letter-spacing="0">Rechnungsdatum:</text><text x="1560.8" y="420.2" font-size="5.37" font-weight="normal" fill="#666" text-anchor="start" letter-spacing="0">21.02.2021</text><text x="1554.7" y="427.8" font-size="5.37" font-weight="bold" fill="#111" text-anchor="end" letter-spacing="0">Lieferdatum:</text><text x="1560.8" y="427.8" font-size="5.37" font-weight="normal" fill="#666" text-anchor="start" letter-spacing="0">17.02.2021</text><text x="1554.7" y="435.7" font-size="5.37" font-weight="bold" fill="#111" text-anchor="end" letter-spacing="0">Lieferantennr.:</text><text x="1560.8" y="435.7" font-size="5.37" font-weight="normal" fill="#666" text-anchor="start" letter-spacing="0">K990202</text><text x="1554.7" y="443.1" font-size="5.37" font-weight="bold" fill="#111" text-anchor="end" letter-spacing="0">Ansprechpartner:</text><text x="1560.8" y="443.1" font-size="5.37" font-weight="normal" fill="#666" text-anchor="start" letter-spacing="0">Max Muster</text><text x="1554.7" y="450.90000000000003" font-size="5.37" font-weight="bold" fill="#111" text-anchor="end" letter-spacing="0">Ihre Bestellnr.:</text><text x="1560.8" y="450.90000000000003" font-size="5.37" font-weight="normal" fill="#666" text-anchor="start" letter-spacing="0">12345678</text><text x="1328.8" y="473" font-size="6.2" font-weight="bold" fill="#2070c0" text-anchor="start" letter-spacing="0.25">RECHNUNG NR. 2021-99997</text><text x="1328.8" y="494.2" font-size="5.34" font-weight="normal" fill="#444" text-anchor="start" letter-spacing="0">Sehr geehrte Damen und Herren,</text><text x="1328.8" y="508" font-size="5.37" font-weight="normal" fill="#444" text-anchor="start" letter-spacing="0">wir stellen Ihnen hiermit folgende Leistungen in Rechnung:</text><rect x="1328.8" y="517" width="164.2" height="12" fill="#0578c2"/><rect x="1493" y="517" width="110.8" height="12" fill="#c2c2c2"/><text x="1333.8" y="524.8" font-size="5.3" font-weight="bold" fill="#fff" text-anchor="start" letter-spacing="0">Pos.</text><text x="1350.9" y="524.8" font-size="5.3" font-weight="bold" fill="#fff" text-anchor="start" letter-spacing="0">Beschreibung</text><text x="1488" y="524.8" font-size="5.3" font-weight="bold" fill="#fff" text-anchor="end" letter-spacing="0">Menge</text><text x="1528" y="524.8" font-size="5.3" font-weight="bold" fill="#111" text-anchor="end" letter-spacing="0">Einzelpreis</text><text x="1546" y="524.8" font-size="5.3" font-weight="bold" fill="#111" text-anchor="middle" letter-spacing="0">Rabatt</text><text x="1600.6" y="524.8" font-size="5.3" font-weight="bold" fill="#111" text-anchor="end" letter-spacing="0">Gesamtpreis</text><text x="1344.8" y="537" font-size="5.3" font-weight="normal" fill="#444" text-anchor="end" letter-spacing="0">1.</text><text x="1350.9" y="537" font-size="5.3" font-weight="normal" fill="#444" text-anchor="start" letter-spacing="0">Stehleuchte</text><text x="1488" y="537" font-size="5.3" font-weight="normal" fill="#444" text-anchor="end" letter-spacing="0">5,00 Stk.</text><text x="1528" y="537" font-size="5.3" font-weight="normal" fill="#444" text-anchor="end" letter-spacing="0">8,00 €</text><text x="1546" y="537" font-size="5.3" font-weight="normal" fill="#444" text-anchor="middle" letter-spacing="0">5%</text><text x="1600.6" y="537" font-size="5.3" font-weight="normal" fill="#444" text-anchor="end" letter-spacing="0">38,00 €</text><text x="1344.8" y="549.8" font-size="5.3" font-weight="normal" fill="#444" text-anchor="end" letter-spacing="0">2.</text><text x="1350.9" y="549.8" font-size="5.3" font-weight="normal" fill="#444" text-anchor="start" letter-spacing="0">Elektromotor</text><text x="1488" y="549.8" font-size="5.3" font-weight="normal" fill="#444" text-anchor="end" letter-spacing="0">10,00 Stk.</text><text x="1528" y="549.8" font-size="5.3" font-weight="normal" fill="#444" text-anchor="end" letter-spacing="0">47,00 €</text><text x="1546" y="549.8" font-size="5.3" font-weight="normal" fill="#444" text-anchor="middle" letter-spacing="0">3%</text><text x="1600.6" y="549.8" font-size="5.3" font-weight="normal" fill="#444" text-anchor="end" letter-spacing="0">455,90 €</text><rect x="1328.8" y="541" width="275" height="0.8" fill="#d8d8d8"/><rect x="1328.8" y="553.8" width="275" height="1.2" fill="#404040"/><text x="1497.8" y="562.9" font-size="5.3" font-weight="bold" fill="#111" text-anchor="start" letter-spacing="0">Nettobetrag</text><text x="1600.6" y="562.9" font-size="5.3" font-weight="bold" fill="#111" text-anchor="end" letter-spacing="0">493,90 €</text><rect x="1493" y="566.8" width="110.8" height="0.6" fill="#e8e8e8"/><text x="1497" y="575.1" font-size="5.3" font-weight="normal" fill="#666" text-anchor="start" letter-spacing="0">Steuerbetrag</text><text x="1600.6" y="575.1" font-size="5.3" font-weight="normal" fill="#666" text-anchor="end" letter-spacing="0">93,84 €</text><rect x="1493" y="579.2" width="110.8" height="13.6" fill="#0578c2"/><rect x="1493" y="579.2" width="110.8" height="1" fill="#333"/><text x="1497.8" y="588.4" font-size="5.3" font-weight="bold" fill="#fff" text-anchor="start" letter-spacing="0">Bruttobetrag</text><text x="1600.6" y="588.4" font-size="5.3" font-weight="bold" fill="#fff" text-anchor="end" letter-spacing="0">587,74 €</text><text x="1328" y="603.6" font-size="4.35" font-weight="normal" fill="#555" text-anchor="start" letter-spacing="0">Zahlungsbedingungen: Zahlung innerhalb von 10 Tagen ab Rechnungseingang mit 2% Skonto, 30 Tage netto.</text><text x="1328" y="623.6" font-size="5.41" font-weight="normal" fill="#444" text-anchor="start" letter-spacing="0">Bei Rückfragen stehen wir selbstverständlich jederzeit gerne zur Verfügung.</text><text x="1328" y="637.6" font-size="5.4" font-weight="normal" fill="#444" text-anchor="start" letter-spacing="0">Mit freundlichen Grüßen</text><g fill="none" stroke="#4a4a4a" stroke-width="0.85" stroke-linecap="round"><path d="M1329.7 659.5C1329.3 667 1330 674 1331.5 673.5C1336 671 1340 660 1342.9 647.7"/><path d="M1345.7 651.5C1344 658 1342 665 1341 669.9"/><path d="M1345.4 667.8h0.5"/><path d="M1350.5 661L1349.8 670.8C1352 664 1355 655 1357.6 646.7L1356.6 668.5C1358 662 1359.5 656 1360.4 652.9L1360 668C1362 664 1364 660 1365.1 661C1366 664 1365 667 1363.5 668C1366 664 1368 658 1370.8 652C1370 660 1369 666 1369.5 669C1372 668 1375 664 1374 662C1372 661 1371 666 1372.5 669C1375 669 1378 666 1380.3 663.3"/><path d="M1377.5 665.5L1376 670.8"/></g><text x="1328" y="679.2" font-size="5.4" font-weight="normal" fill="#444" text-anchor="start" letter-spacing="0">Max Muster</text><rect x="1327.7" y="711.8" width="276" height="1.2" fill="#1b7fc8"/><circle cx="1361.5" cy="709.3" r="7.1" fill="#fff" stroke="#8a8a8a" stroke-width="0.8"/><circle cx="1430.1" cy="709.3" r="7.1" fill="#fff" stroke="#8a8a8a" stroke-width="0.8"/><circle cx="1498.6" cy="709.3" r="7.1" fill="#fff" stroke="#8a8a8a" stroke-width="0.8"/><circle cx="1567.6" cy="709.3" r="7.1" fill="#fff" stroke="#8a8a8a" stroke-width="0.8"/><path d="M1358 713.4V708.6L1361.5 705.2L1365 708.6V713.4H1362.7V710.6H1360.3V713.4Z" fill="none" stroke="#555" stroke-width="1.1" stroke-linejoin="round"/><rect x="1425.8" y="706" width="8.8" height="7.4" fill="none" stroke="#666" stroke-width="0.9"/><rect x="1426.6" y="706.8" width="2.6" height="5.8" fill="#777"/><path d="M1430.2 707.6H1433.8M1430.2 709.6H1433.8M1430.2 711.6H1433.8" stroke="#666" stroke-width="0.8"/><path d="M1495.5 708C1496 706 1498 705.2 1500 705.6M1501.8 711C1501.3 713 1499.3 713.8 1497.3 713.4M1498.6 706.5V712.5M1497.2 708.3C1497.8 707.5 1499.6 707.5 1500 708.4C1500.4 709.6 1497 709.6 1497.2 710.8C1497.5 711.8 1499.6 711.8 1500 711" fill="none" stroke="#555" stroke-width="0.75"/><rect x="1564.4" y="709" width="6.4" height="4.6" fill="none" stroke="#666" stroke-width="0.8"/><circle cx="1567.6" cy="706.4" r="1.6" fill="none" stroke="#666" stroke-width="0.8"/><path d="M1566.3 709.4L1567.6 712L1568.9 709.4" fill="none" stroke="#666" stroke-width="0.7"/><text x="1361.5" y="723" font-size="3.9" font-weight="normal" fill="#555" text-anchor="middle" letter-spacing="0">Max Mustermann GmbH</text><text x="1361.5" y="728.2" font-size="3.9" font-weight="normal" fill="#555" text-anchor="middle" letter-spacing="0">Musterstraße 12</text><text x="1361.5" y="733.4" font-size="3.9" font-weight="normal" fill="#555" text-anchor="middle" letter-spacing="0">12345 Musterstadt</text><text x="1430.2" y="723" font-size="3.9" font-weight="normal" fill="#555" text-anchor="middle" letter-spacing="0">+49 1234/12 34 56</text><text x="1430.2" y="728.2" font-size="3.9" font-weight="normal" fill="#555" text-anchor="middle" letter-spacing="0">www.firmaxyz.de</text><text x="1430.2" y="733.4" font-size="3.9" font-weight="normal" fill="#555" text-anchor="middle" letter-spacing="0">firmaxyz@gmail.de</text><text x="1498.7" y="723" font-size="3.9" font-weight="normal" fill="#555" text-anchor="middle" letter-spacing="0">Musterbank</text><text x="1498.7" y="728.2" font-size="3.9" font-weight="normal" fill="#555" text-anchor="middle" letter-spacing="0">DE 0212 0300 0000 0020 2051</text><text x="1498.7" y="733.4" font-size="3.9" font-weight="normal" fill="#555" text-anchor="middle" letter-spacing="0">BIC: ABCDEFGHI</text><text x="1567.3" y="723" font-size="3.9" font-weight="normal" fill="#555" text-anchor="middle" letter-spacing="0">USt.-ID: DE999999999</text><text x="1567.3" y="728.2" font-size="3.9" font-weight="normal" fill="#555" text-anchor="middle" letter-spacing="0">Geschäftsführer:</text><text x="1567.3" y="733.4" font-size="3.9" font-weight="normal" fill="#555" text-anchor="middle" letter-spacing="0">Max Muster</text></svg><div class="abs" style="left:1298px;top:436px;width:8px;height:1px;background:#c8c8c8"></div><div class="abs" style="left:1298px;top:597px;width:8px;height:1px;background:#c8c8c8"></div></body></html>
